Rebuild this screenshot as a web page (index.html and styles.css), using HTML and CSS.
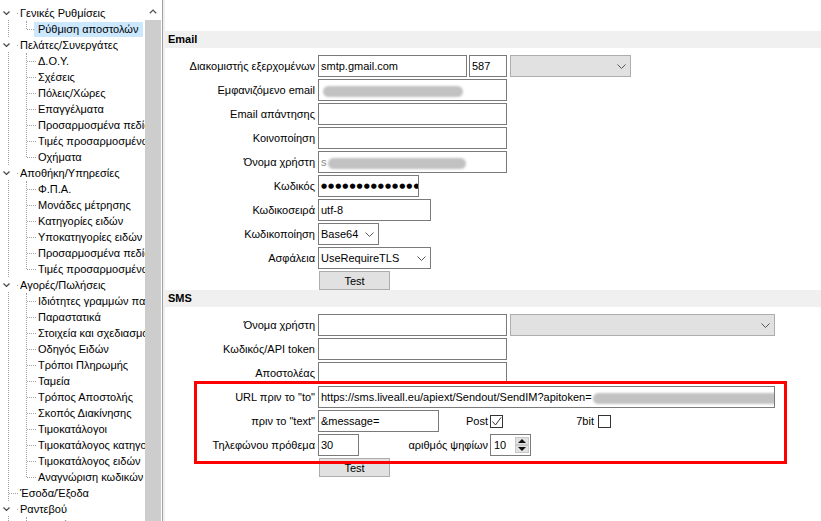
FILE: index.html
```html
<!DOCTYPE html>
<html lang="el">
<head>
<meta charset="utf-8">
<title>Ρύθμιση αποστολών</title>
<link rel="stylesheet" href="styles.css">
</head>
<body>
<div class="app">
  <aside class="tree-panel">
    <div class="tree">
      <div class="node root"><span class="twisty"><svg width="15" height="14" viewBox="0 0 15 14"><polyline points="2.5,5.5 5.5,8.5 8.5,5.5" fill="none" stroke="#444" stroke-width="1.2"/></svg></span>Γενικές Ρυθμίσεις</div>
      <div class="group">
        <div class="node child"><span class="sel">Ρύθμιση αποστολών</span></div>
      </div>
      <div class="node root"><span class="twisty"><svg width="15" height="14" viewBox="0 0 15 14"><polyline points="2.5,5.5 5.5,8.5 8.5,5.5" fill="none" stroke="#444" stroke-width="1.2"/></svg></span>Πελάτες/Συνεργάτες</div>
      <div class="group">
        <div class="node child">Δ.Ο.Υ.</div>
        <div class="node child">Σχέσεις</div>
        <div class="node child">Πόλεις/Χώρες</div>
        <div class="node child">Επαγγέλματα</div>
        <div class="node child">Προσαρμοσμένα πεδία</div>
        <div class="node child">Τιμές προσαρμοσμένων πεδίων</div>
        <div class="node child">Οχήματα</div>
      </div>
      <div class="node root"><span class="twisty"><svg width="15" height="14" viewBox="0 0 15 14"><polyline points="2.5,5.5 5.5,8.5 8.5,5.5" fill="none" stroke="#444" stroke-width="1.2"/></svg></span>Αποθήκη/Υπηρεσίες</div>
      <div class="group">
        <div class="node child">Φ.Π.Α.</div>
        <div class="node child">Μονάδες μέτρησης</div>
        <div class="node child">Κατηγορίες ειδών</div>
        <div class="node child">Υποκατηγορίες ειδών</div>
        <div class="node child">Προσαρμοσμένα πεδία</div>
        <div class="node child">Τιμές προσαρμοσμένων πεδίων</div>
      </div>
      <div class="node root"><span class="twisty"><svg width="15" height="14" viewBox="0 0 15 14"><polyline points="2.5,5.5 5.5,8.5 8.5,5.5" fill="none" stroke="#444" stroke-width="1.2"/></svg></span>Αγορές/Πωλήσεις</div>
      <div class="group">
        <div class="node child">Ιδιότητες γραμμών παραστατικών</div>
        <div class="node child">Παραστατικά</div>
        <div class="node child">Στοιχεία και σχεδιασμός</div>
        <div class="node child">Οδηγός Ειδών</div>
        <div class="node child">Τρόποι Πληρωμής</div>
        <div class="node child">Ταμεία</div>
        <div class="node child">Τρόπος Αποστολής</div>
        <div class="node child">Σκοπός Διακίνησης</div>
        <div class="node child">Τιμοκατάλογοι</div>
        <div class="node child">Τιμοκατάλογος κατηγοριών</div>
        <div class="node child">Τιμοκατάλογος ειδών</div>
        <div class="node child">Αναγνώριση κωδικών</div>
      </div>
      <div class="node root">Έσοδα/Έξοδα</div>
      <div class="node root"><span class="twisty"><svg width="15" height="14" viewBox="0 0 15 14"><polyline points="2.5,5.5 5.5,8.5 8.5,5.5" fill="none" stroke="#444" stroke-width="1.2"/></svg></span>Ραντεβού</div>
      <div class="group">
        <div class="node child">Ρυθμίσεις</div>
      </div>
    </div>
    <div class="vscroll">
      <div class="vs-btn"><svg width="8" height="5" viewBox="0 0 8 5"><polyline points="0.8,4.3 4,1.1 7.2,4.3" fill="none" stroke="#555" stroke-width="1.3"/></svg></div>
      <div class="vs-thumb"></div>
    </div>
  </aside>
  <div class="splitter"></div>
  <main class="content">
    <div class="section-head">Email</div>
    <div class="form">
      <div class="row">
        <span class="lbl">Διακομιστής εξερχομένων</span>
        <div class="field w149">smtp.gmail.com</div>
        <div class="field w38 ml2">587</div>
        <div class="field combo disabled w121 ml3"><span></span><svg class="chev" width="9" height="5" viewBox="0 0 9 5"><polyline points="0.5,0.5 4.5,4.5 8.5,0.5" fill="none" stroke="#555" stroke-width="1"/></svg></div>
      </div>
      <div class="row">
        <span class="lbl">Εμφανιζόμενο email</span>
        <div class="field w189"><span class="redact r1"></span></div>
      </div>
      <div class="row">
        <span class="lbl">Email απάντησης</span>
        <div class="field w189"></div>
      </div>
      <div class="row">
        <span class="lbl">Κοινοποίηση</span>
        <div class="field w189"></div>
      </div>
      <div class="row">
        <span class="lbl">Όνομα χρήστη</span>
        <div class="field w189"><span class="faded">s</span><span class="redact r2"></span></div>
      </div>
      <div class="row">
        <span class="lbl">Κωδικός</span>
        <div class="field w101 pw">●●●●●●●●●●●●●●●</div>
      </div>
      <div class="row">
        <span class="lbl">Κωδικοσειρά</span>
        <div class="field w113">utf-8</div>
      </div>
      <div class="row">
        <span class="lbl">Κωδικοποίηση</span>
        <div class="field combo w61"><span>Base64</span><svg class="chev" width="9" height="5" viewBox="0 0 9 5"><polyline points="0.5,0.5 4.5,4.5 8.5,0.5" fill="none" stroke="#555" stroke-width="1"/></svg></div>
      </div>
      <div class="row">
        <span class="lbl">Ασφάλεια</span>
        <div class="field combo w113"><span>UseRequireTLS</span><svg class="chev" width="9" height="5" viewBox="0 0 9 5"><polyline points="0.5,0.5 4.5,4.5 8.5,0.5" fill="none" stroke="#555" stroke-width="1"/></svg></div>
      </div>
      <div class="btn">Test</div>
    </div>
    <div class="section-head">SMS</div>
    <div class="form">
      <div class="row">
        <span class="lbl">Όνομα χρήστη</span>
        <div class="field w189"></div>
        <div class="field combo disabled w265 ml3"><span></span><svg class="chev" width="9" height="5" viewBox="0 0 9 5"><polyline points="0.5,0.5 4.5,4.5 8.5,0.5" fill="none" stroke="#555" stroke-width="1"/></svg></div>
      </div>
      <div class="row">
        <span class="lbl">Κωδικός/API token</span>
        <div class="field w189"></div>
      </div>
      <div class="row">
        <span class="lbl">Αποστολέας</span>
        <div class="field w189"></div>
      </div>
      <div class="row">
        <span class="lbl">URL πριν το "to"</span>
        <div class="field w457">https://sms.liveall.eu/apiext/Sendout/SendIM?apitoken=<span class="redact r3"></span></div>
      </div>
      <div class="row">
        <span class="lbl">πριν το "text"</span>
        <div class="field w121">&amp;message=</div>
        <span class="sublbl w49">Post</span>
        <span class="check"><svg width="11" height="11" viewBox="0 0 11 11"><polyline points="1.5,5.5 4.5,9 10,1.5" fill="none" stroke="#333" stroke-width="1"/></svg></span>
        <span class="sublbl w91 mr4">7bit</span>
        <span class="check"></span>
      </div>
      <div class="row">
        <span class="lbl">Τηλεφώνου πρόθεμα</span>
        <div class="field w41">30</div>
        <span class="sublbl w129">αριθμός ψηφίων</span>
        <div class="spin">
          <span class="spin-val">10</span>
          <span class="spin-btns">
            <span class="sb"><svg width="8" height="4" viewBox="0 0 8 4"><polygon points="0,4 4,0 8,4" fill="#111"/></svg></span>
            <span class="sb"><svg width="8" height="4" viewBox="0 0 8 4"><polygon points="0,0 8,0 4,4" fill="#111"/></svg></span>
          </span>
        </div>
      </div>
      <div class="btn">Test</div>
    </div>
    <div class="annot"></div>
  </main>
</div>
</body>
</html>
```
FILE: styles.css
```css
* { box-sizing: border-box; }
html, body { margin: 0; height: 521px; overflow: hidden; background: #fff; }
body { font: 11px "Liberation Sans", Arial, sans-serif; color: #000; }

.app { display: flex; height: 521px; }

/* tree */
.tree-panel { width: 163px; flex: none; display: flex; border-right: 1px solid #a0a0a0; padding-right: 1px; }
.tree { width: 145px; flex: none; position: relative; overflow: hidden; padding-top: 5px; white-space: nowrap; }
.tree::before { content: ""; position: absolute; left: 8px; top: 13px; bottom: 0; border-left: 1px dotted #a0a0a0; }
.node { position: relative; height: 16px; line-height: 16px; }
.node.root { padding-left: 20px; }
.node.root::after { content: ""; position: absolute; left: 9px; top: 8px; width: 9px; border-top: 1px dotted #a0a0a0; }
.twisty { position: absolute; left: 1px; top: 1px; width: 15px; height: 14px; background: #fff; z-index: 1; display: block; }
.twisty svg { display: block; }
.group { position: relative; }
.group::before { content: ""; position: absolute; left: 26px; top: 0; bottom: 8px; border-left: 1px dotted #a0a0a0; }
.node.child { padding-left: 38px; }
.node.child::after { content: ""; position: absolute; left: 27px; top: 8px; width: 9px; border-top: 1px dotted #a0a0a0; }
.sel { position: relative; z-index: 1; display: inline-block; height: 15px; line-height: 15px; margin-left: -4px; padding: 0 5px 0 4px; background: #cce8ff; }

.vscroll { width: 16px; flex: none; display: flex; flex-direction: column; }
.vs-btn { height: 20px; display: flex; align-items: center; justify-content: center; padding-top: 3px; }
.vs-btn svg { display: block; }
.vs-thumb { flex: 1; background: #cdcdcd; }

.splitter { width: 2px; flex: none; background: #f0f0f0; }

/* content */
.content { flex: 1; position: relative; padding-top: 31px; }
.section-head { height: 17px; line-height: 17px; background: #f0f0f0; font-weight: bold; padding-left: 3px; }
.form { padding-top: 7px; }
.row { display: flex; align-items: center; height: 22px; margin-bottom: 2px; }
.lbl { width: 150px; flex: none; margin-right: 3px; text-align: right; white-space: nowrap; }
.field { flex: none; height: 22px; line-height: 20px; border: 1px solid #7a7a7a; background: #fff; padding-left: 2px; overflow: hidden; white-space: nowrap; }
.combo { display: flex; align-items: center; justify-content: space-between; padding-right: 4px; }
.combo.disabled { background: #e1e1e1; border-color: #adadad; }
.chev { display: block; flex: none; }

.w38 { width: 38px; } .w41 { width: 41px; } .w61 { width: 61px; } .w101 { width: 101px; }
.w113 { width: 113px; } .w121 { width: 121px; } .w149 { width: 149px; } .w189 { width: 189px; }
.w265 { width: 265px; } .w457 { width: 457px; }
.ml2 { margin-left: 2px; } .ml3 { margin-left: 3px; }

.pw { font-family: "DejaVu Sans", sans-serif; font-size: 7px; letter-spacing: 1px; padding-left: 2px; }

.redact { display: inline-block; height: 11px; background: #c2c2c2; border-radius: 6px; filter: blur(0.8px); vertical-align: middle; }
.r1 { width: 140px; margin-left: 2px; }
.r2 { width: 138px; margin-left: 1px; }
.r3 { width: 189px; margin-left: 1px; }
.faded { color: #888; }

.sublbl { flex: none; text-align: right; margin-right: 2px; white-space: nowrap; }
.w49 { width: 49px; } .w91 { width: 91px; } .w129 { width: 129px; }
.mr4 { margin-right: 4px; }
.check { flex: none; width: 13px; height: 13px; border: 1px solid #333; background: #fff; display: flex; align-items: center; justify-content: center; }
.check svg { display: block; }

.spin { flex: none; width: 41px; height: 22px; border: 1px solid #7a7a7a; display: flex; }
.spin-val { flex: 1; padding-left: 3px; line-height: 20px; }
.spin-btns { flex: none; width: 14px; margin: 2px 1px 0 0; display: flex; flex-direction: column; }
.sb { height: 8px; background: #e1e1e1; border: 1px solid #c8c8c8; display: flex; align-items: center; justify-content: center; }
.sb svg { display: block; }

.btn { margin-left: 154px; margin-top: 1px; width: 71px; height: 19px; line-height: 19px; text-align: center; background: #e1e1e1; border: 1px solid #adadad; overflow: hidden; }

.annot { position: absolute; left: 29px; top: 381px; width: 593px; height: 83px; border: 3px solid #f00; pointer-events: none; }
```
